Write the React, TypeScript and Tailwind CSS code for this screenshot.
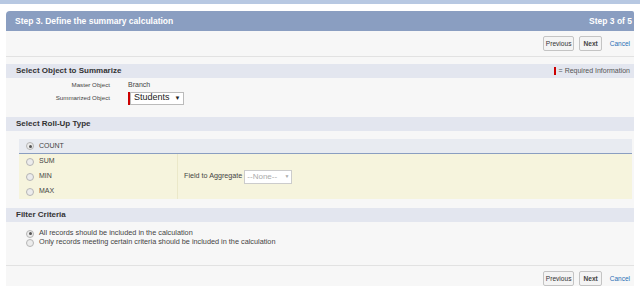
import React from "react";

const F = { fontFamily: '"Liberation Sans", Arial, sans-serif' };

function Radio({ checked }: { checked?: boolean }) {
  return (
    <span className="inline-flex items-center justify-center w-[8px] h-[8px] rounded-full border border-[#b5b5b5] bg-[#ececec] shrink-0">
      {checked && <span className="w-[3px] h-[3px] rounded-full bg-[#555]" />}
    </span>
  );
}

function Buttons() {
  return (
    <div className="flex items-center justify-end pr-[4px]">
      <span className="h-[15px] px-[2px] flex items-center border border-[#c4c4c4] rounded-[2px] bg-[#f4f4f4] text-[6.6px] text-[#333]">Previous</span>
      <span className="ml-[5px] h-[15px] px-[3px] flex items-center border border-[#c4c4c4] rounded-[2px] bg-[#f4f4f4] text-[6.6px] font-bold text-[#444]">Next</span>
      <span className="ml-[8px] text-[6.5px] text-[#2a6fb5]">Cancel</span>
    </div>
  );
}

function SectionHeader({ title, right }: { title: string; right?: React.ReactNode }) {
  return (
    <div className="h-[14px] bg-[#e3e6ef] flex items-center justify-between pl-[10px] pr-[4px]">
      <span className="text-[8px] font-bold text-[#333]">{title}</span>
      {right}
    </div>
  );
}

export default function App() {
  return (
    <div className="w-[640px] h-[286px] bg-white overflow-hidden" style={F}>
      <div className="h-[4px] bg-[#b7c8e2]" />
      <div className="mt-[7px] ml-[6px] mr-[6px]">
        <div className="h-[20px] bg-[#8a9ec1] rounded-tl-[4px] rounded-tr-[2px] flex items-center justify-between pl-[9px] pr-[2px] text-white font-bold text-[8.5px]">
          <span>Step 3. Define the summary calculation</span>
          <span>Step 3 of 5</span>
        </div>
        <div className="bg-[#f7f7f7]">
          <div className="h-[26px] flex items-center justify-end border-b border-[#e2e2e2]">
            <Buttons />
          </div>
          <div className="pt-[7px]">
            <SectionHeader
              title="Select Object to Summarize"
              right={
                <span className="flex items-center gap-[3px] text-[7px] text-[#555]">
                  <span className="w-[2px] h-[8px] bg-[#c00]" />= Required Information
                </span>
              }
            />
            <div className="h-[39px] pt-[2px] text-[6.2px]">
              <div className="h-[10px] flex items-center">
                <span className="w-[104px] text-right text-[#444]">Master Object</span>
                <span className="ml-[18px] text-[7px] text-[#444]">Branch</span>
              </div>
              <div className="h-[16px] flex items-center">
                <span className="w-[104px] text-right text-[#444]">Summarized Object</span>
                <span className="ml-[18px] flex items-center h-[13px]">
                  <span className="w-[2px] h-[13px] bg-[#c00]" />
                  <span className="h-[13px] flex items-center border border-[#bbb] bg-white px-[3px] gap-[5px] text-[9px] text-[#222]">
                    Students <span className="text-[6px]">▼</span>
                  </span>
                </span>
              </div>
            </div>
            <SectionHeader title="Select Roll-Up Type" />
            <div className="pt-[8px] pl-[13px] pr-[2px]">
              <div className="h-[15px] bg-[#e8ebf1] border-b border-[#8a9ec1] flex items-center pl-[7px] gap-[5px] text-[7px] text-[#444]">
                <Radio checked />
                <span>COUNT</span>
              </div>
              <div className="h-[45px] bg-[#f6f4dd] flex">
                <div className="w-[159px] border-r border-[#ebe8c9] flex flex-col justify-center pl-[7px] text-[7px] text-[#444]">
                  {["SUM", "MIN", "MAX"].map((t) => (
                    <div key={t} className="h-[15px] flex items-center gap-[5px]">
                      <Radio />
                      <span>{t}</span>
                    </div>
                  ))}
                </div>
                <div className="flex items-center pl-[6px] text-[7.2px] text-[#444]">
                  <span>Field to Aggregate</span>
                  <span className="ml-[2px] h-[14px] w-[48px] flex items-center justify-between border border-[#ccc] bg-white px-[2px] text-[8px] text-[#aaa]">
                    --None-- <span className="text-[5px]">▼</span>
                  </span>
                </div>
              </div>
            </div>
            <div className="pt-[9px]">
              <SectionHeader title="Filter Criteria" />
            </div>
            <div className="h-[43px] pt-[7px] pl-[20px] text-[7.3px] text-[#444]">
              <div className="h-[9px] flex items-center gap-[5px]">
                <Radio checked />
                <span>All records should be included in the calculation</span>
              </div>
              <div className="h-[9px] flex items-center gap-[5px]">
                <Radio />
                <span>Only records meeting certain criteria should be included in the calculation</span>
              </div>
            </div>
          </div>
          <div className="h-[26px] flex items-center justify-end border-t border-[#e2e2e2]">
            <Buttons />
          </div>
        </div>
      </div>
    </div>
  );
}
